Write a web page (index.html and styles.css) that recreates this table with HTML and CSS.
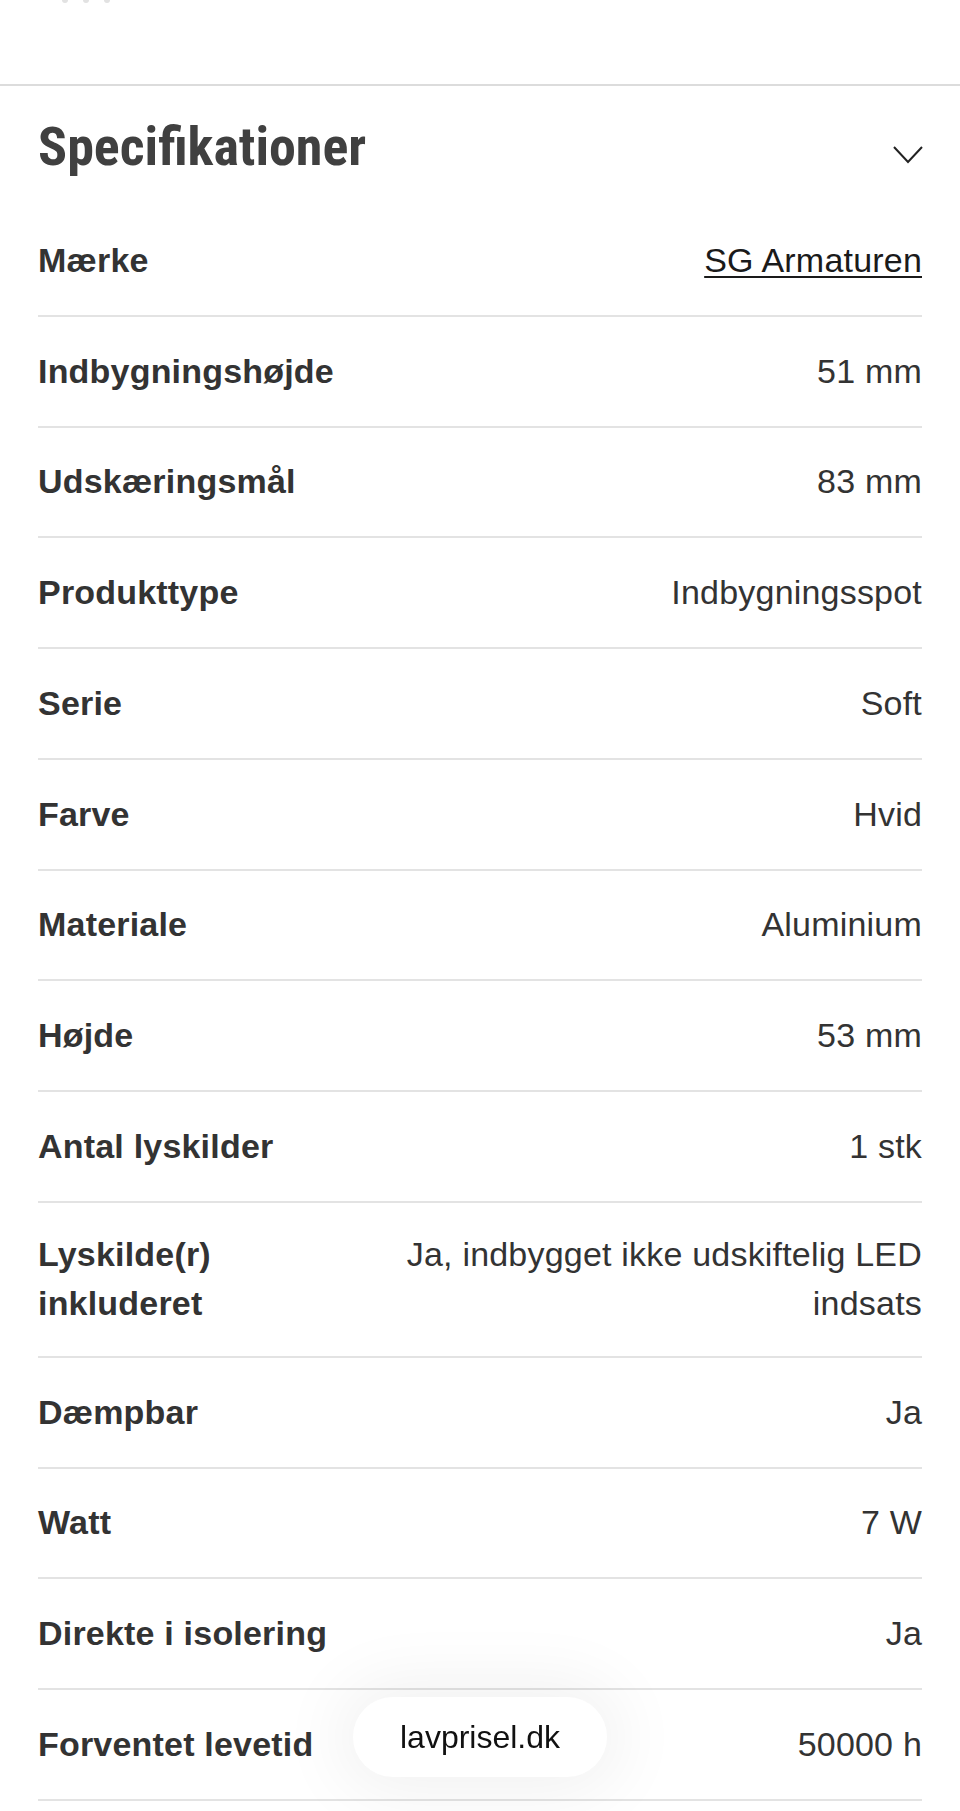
FILE: index.html
```html
<!DOCTYPE html>
<html lang="da">
<head>
<meta charset="utf-8">
<title>Specifikationer</title>
<link rel="stylesheet" href="styles.css">
</head>
<body>
<div class="prev-section">
  <div class="prev-marks"><span></span><span></span><span></span></div>
</div>
<section class="specs">
  <div class="specs-header">
    <h2 class="specs-title">Specifikationer</h2>
    <svg class="chevron" width="30" height="18" viewBox="0 0 30 18" aria-hidden="true">
      <polyline points="1,1 15,16 29,1" fill="none" stroke="#222" stroke-width="2"/>
    </svg>
  </div>
  <div class="spec-list">
    <div class="spec-row"><div class="spec-label">Mærke</div><div class="spec-value"><a class="spec-link" href="#">SG Armaturen</a></div></div>
    <div class="spec-row"><div class="spec-label">Indbygningshøjde</div><div class="spec-value">51 mm</div></div>
    <div class="spec-row"><div class="spec-label">Udskæringsmål</div><div class="spec-value">83 mm</div></div>
    <div class="spec-row"><div class="spec-label">Produkttype</div><div class="spec-value">Indbygningsspot</div></div>
    <div class="spec-row"><div class="spec-label">Serie</div><div class="spec-value">Soft</div></div>
    <div class="spec-row"><div class="spec-label">Farve</div><div class="spec-value">Hvid</div></div>
    <div class="spec-row"><div class="spec-label">Materiale</div><div class="spec-value">Aluminium</div></div>
    <div class="spec-row"><div class="spec-label">Højde</div><div class="spec-value">53 mm</div></div>
    <div class="spec-row"><div class="spec-label">Antal lyskilder</div><div class="spec-value">1 stk</div></div>
    <div class="spec-row"><div class="spec-label">Lyskilde(r) inkluderet</div><div class="spec-value">Ja, indbygget ikke udskiftelig LED indsats</div></div>
    <div class="spec-row"><div class="spec-label">Dæmpbar</div><div class="spec-value">Ja</div></div>
    <div class="spec-row"><div class="spec-label">Watt</div><div class="spec-value">7 W</div></div>
    <div class="spec-row"><div class="spec-label">Direkte i isolering</div><div class="spec-value">Ja</div></div>
    <div class="spec-row"><div class="spec-label">Forventet levetid</div><div class="spec-value">50000 h</div></div>
  </div>
</section>
<div class="url-pill">lavprisel.dk</div>
</body>
</html>
```

FILE: styles.css
```css
html, body {
  margin: 0;
  padding: 0;
  background: #ffffff;
}

body {
  font-family: "Liberation Sans", Arial, Helvetica, sans-serif;
  color: #333333;
}

.prev-section {
  height: 84px;
  border-bottom: 2px solid #dcdcdc;
}

.prev-marks {
  display: flex;
  gap: 15px;
  padding-left: 62px;
}

.prev-marks span {
  display: block;
  width: 6px;
  height: 3px;
  background: #e2e2e2;
  border-radius: 0 0 3px 3px;
}

.specs {
  padding: 0 38px;
}

.specs-header {
  display: flex;
  align-items: center;
  justify-content: space-between;
  padding: 28px 0 27px;
}

.specs-title {
  margin: 0;
  font-family: Roboto, "Liberation Sans", sans-serif;
  font-weight: 700;
  font-size: 54px;
  line-height: 65px;
  color: #404040;
  font-stretch: 75%;
}

.chevron {
  display: block;
  margin-top: 17px;
  margin-right: -1px;
}

.spec-row {
  box-sizing: border-box;
  display: flex;
  align-items: center;
  min-height: 110.75px;
  padding: 27.5px 0;
  border-bottom: 2px solid #e3e3e3;
  font-size: 34px;
  line-height: 49px;
  letter-spacing: 0.2px;
}

.spec-label {
  flex: 0 0 320px;
  font-weight: 700;
  color: #333333;
}

.spec-value {
  flex: 1 1 auto;
  padding-left: 20px;
  text-align: right;
  color: #333333;
}

.spec-link {
  color: #1a1a1a;
  text-decoration: underline;
  text-decoration-thickness: 2px;
  text-underline-offset: 4px;
}

.url-pill {
  position: fixed;
  left: 50%;
  bottom: 34px;
  transform: translateX(-50%);
  width: 254px;
  height: 80px;
  border-radius: 40px;
  background: #ffffff;
  box-shadow: 0 0 70px 14px rgba(0, 0, 0, 0.06);
  display: flex;
  align-items: center;
  justify-content: center;
  font-size: 32px;
  color: #111111;
  padding-top: 1px;
  box-sizing: border-box;
}
```
